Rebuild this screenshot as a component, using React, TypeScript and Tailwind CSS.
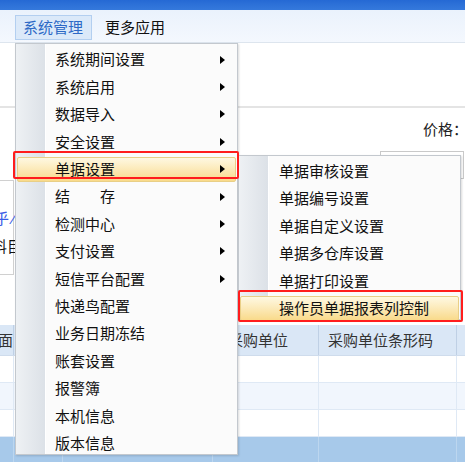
import React from 'react';

const mainItems: { label: string; sub?: boolean }[] = [
  { label: '系统期间设置', sub: true },
  { label: '系统启用', sub: true },
  { label: '数据导入', sub: true },
  { label: '安全设置', sub: true },
  { label: '单据设置', sub: true },
  { label: '结\u3000\u3000存', sub: true },
  { label: '检测中心', sub: true },
  { label: '支付设置', sub: true },
  { label: '短信平台配置', sub: true },
  { label: '快递鸟配置' },
  { label: '业务日期冻结' },
  { label: '账套设置' },
  { label: '报警簿' },
  { label: '本机信息' },
  { label: '版本信息' },
];

const subItems = ['单据审核设置', '单据编号设置', '单据自定义设置', '单据多仓库设置', '单据打印设置', '操作员单据报表列控制'];

const Arrow = () => (
  <span className="absolute right-[12px] top-1/2 -translate-y-1/2 w-0 h-0 border-y-[4px] border-y-transparent border-l-[5px] border-l-black" />
);

const Highlight = () => (
  <span className="absolute inset-x-[1px] inset-y-[1px] rounded-[2px] border border-[#e9cf86] bg-gradient-to-b from-[#fef8e2] to-[#f9da8a]" />
);

export default function App() {
  return (
    <div className="relative w-[465px] h-[462px] overflow-hidden bg-white text-[15px] text-[#111] font-['Microsoft_YaHei','Noto_Sans_CJK_SC',sans-serif]">
      {/* title strip */}
      <div className="h-[10px] bg-gradient-to-b from-[#2569d4] to-[#3579dc]" />

      {/* menu bar */}
      <div className="h-[33px] flex items-start gap-[13px] pl-[15px] pt-[5px] bg-gradient-to-b from-[#eaf2fc] to-[#f4f8fe] border-b border-[#dde5ee]">
        <div className="h-[25px] w-[77px] flex items-center pl-[7px] bg-[#dbe9f9] border border-[#b3cff0] text-[#2d69c6]">系统管理</div>
        <div className="h-[25px] flex items-center">更多应用</div>
      </div>

      {/* toolbar area */}
      <div className="h-[65px] border-b-2 border-[#e4e4e4]" />

      {/* form area */}
      <div className="relative h-[217px]">
        <div className="absolute left-[423px] top-[10px] text-[#222] whitespace-nowrap">价格：</div>
        <div className="absolute left-[380px] top-[43px] w-[84px] h-[28px] border border-[#c9c9c9]" />
        <div className="absolute left-0 top-[72px] w-[14px] h-[95px] border-t border-r border-b border-[#d0d0d0]">
          <div className="absolute left-[-6px] top-[26px] text-[#3a5be6] whitespace-nowrap">乎 ⁄</div>
          <div className="absolute left-[-8px] top-[54px] whitespace-nowrap">料目</div>
        </div>
      </div>

      {/* grid */}
      <div className="text-[#333]">
        <div className="flex h-[31px] bg-[#dae7f6] border-b border-[#cfdcec]">
          <div className="w-[14px] overflow-hidden flex items-center justify-end border-r border-[#bfd0e5]"><span className="whitespace-nowrap">页面</span></div>
          <div className="w-[49px] border-r border-[#bfd0e5]" />
          <div className="w-[150px] border-r border-[#bfd0e5]" />
          <div className="w-[106px] flex items-center pl-[15px] border-r border-[#bfd0e5]">采购单位</div>
          <div className="w-[138px] flex items-center pl-[9px] border-r border-[#bfd0e5]">采购单位条形码</div>
          <div className="flex-1" />
        </div>
        {['bg-white', 'bg-[#f1f6fd]', 'bg-white'].map((bg, i) => (
          <div key={i} className={`flex h-[27px] border-b border-[#dfe9f5] ${bg}`}>
            <div className="w-[14px] border-r border-[#dfe9f5]" />
            <div className="w-[49px] border-r border-[#dfe9f5]" />
            <div className="w-[150px] border-r border-[#dfe9f5]" />
            <div className="w-[106px] border-r border-[#dfe9f5]" />
            <div className="w-[138px] border-r border-[#dfe9f5]" />
            <div className="flex-1" />
          </div>
        ))}
        <div className="flex h-[26px] bg-[#a7c9ea]">
          <div className="w-[14px] border-r border-[#bcd6ef]" />
          <div className="w-[49px] border-r border-[#bcd6ef]" />
          <div className="w-[150px] border-r border-[#bcd6ef]" />
          <div className="w-[106px] border-r border-[#bcd6ef]" />
          <div className="w-[138px] border-r border-[#bcd6ef]" />
          <div className="flex-1" />
        </div>
      </div>

      {/* main dropdown */}
      <div className="absolute left-[15px] top-[43px] w-[223px] h-[412px] bg-[#fbfbfb] border border-[#c3c8ce] shadow-[1px_1px_2px_rgba(0,0,0,0.15)] pt-[2px]">
        <div className="absolute left-0 top-0 bottom-0 w-[30px] bg-gradient-to-r from-[#eef1f4] to-[#dce1e7] border-r border-white" />
        {mainItems.map((it, i) => (
          <div key={it.label} className="relative h-[27.4px] flex items-center">
            {i === 4 && <Highlight />}
            <span className="relative pl-[39px] whitespace-pre">{it.label}</span>
            {it.sub && <Arrow />}
          </div>
        ))}
      </div>

      {/* sub dropdown */}
      <div className="absolute left-[238px] top-[155px] w-[223px] h-[165px] bg-[#fbfbfb] border border-[#c3c8ce] shadow-[1px_1px_2px_rgba(0,0,0,0.15)] pt-[1px]">
        <div className="absolute left-0 top-0 bottom-0 w-[30px] bg-gradient-to-r from-[#eef1f4] to-[#dce1e7] border-r border-white" />
        {subItems.map((s, i) => (
          <div key={s} className="relative h-[27.5px] flex items-center">
            {i === 5 && <Highlight />}
            <span className="relative pl-[40px] whitespace-nowrap">{s}</span>
          </div>
        ))}
      </div>

      {/* red annotation boxes */}
      <div className="absolute left-[13px] top-[151px] w-[226px] h-[28px] border-[2.5px] border-[#ff1d1d] rounded-[2px]" />
      <div className="absolute left-[238px] top-[290px] w-[225px] h-[32px] border-[2.5px] border-[#ff1d1d] rounded-[2px]" />
    </div>
  );
}
